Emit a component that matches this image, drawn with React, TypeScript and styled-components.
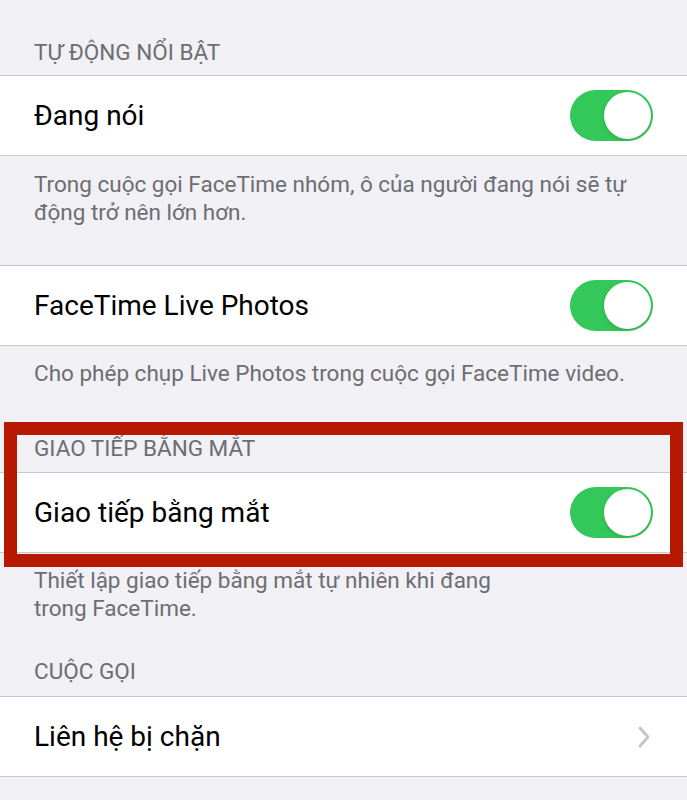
import React from "react";
import styled, { createGlobalStyle } from "styled-components";

const GlobalStyle = createGlobalStyle`
  html, body {
    margin: 0;
    padding: 0;
    background: #f0f0f5;
  }
  body {
    font-family: Roboto, "Liberation Sans", Arial, sans-serif;
    -webkit-font-smoothing: antialiased;
  }
`;

const Page = styled.div`
  position: relative;
  width: 687px;
  height: 800px;
  overflow: hidden;
  background: #f0f0f5;
`;

const Header = styled.div<{ $h: number; $pb?: number }>`
  height: ${(p) => p.$h}px;
  box-sizing: border-box;
  display: flex;
  align-items: flex-end;
  padding: 0 34px ${(p) => p.$pb ?? 10}px;
  font-size: 22.5px;
  line-height: 26px;
  color: #6d6d72;
  text-transform: uppercase;
`;

const Group = styled.div`
  background: #ffffff;
  border-top: 1px solid #c8c7cc;
  border-bottom: 1px solid #c8c7cc;
`;

const Row = styled.div`
  height: 79px;
  display: flex;
  align-items: center;
  justify-content: space-between;
  padding: 0 34px;
`;

const Label = styled.span`
  font-size: 28px;
  color: #000;
`;

const Footer = styled.div<{ $pt: number; $maxW?: number }>`
  padding: ${(p) => p.$pt}px 34px 0;
  font-size: 22.5px;
  line-height: 28px;
  color: #6d6d72;
  ${(p) => (p.$maxW ? `max-width: ${p.$maxW}px;` : "")}
`;

const Track = styled.div<{ $on: boolean }>`
  width: 83px;
  height: 51px;
  border-radius: 26px;
  background: ${(p) => (p.$on ? "#34c759" : "#e9e9eb")};
  position: relative;
  flex-shrink: 0;
`;

const Knob = styled.div<{ $on: boolean }>`
  position: absolute;
  top: 2px;
  ${(p) => (p.$on ? "right: 2px;" : "left: 2px;")}
  width: 47px;
  height: 47px;
  border-radius: 50%;
  background: #fff;
  box-shadow: 0 2px 4px rgba(0, 0, 0, 0.12), 0 0 1px rgba(0, 0, 0, 0.1);
`;

const Highlight = styled.div`
  position: absolute;
  left: 4px;
  top: 422px;
  width: 679px;
  height: 145px;
  box-sizing: border-box;
  border: 13px solid #b51a00;
  pointer-events: none;
`;

const Chevron = () => (
  <svg width="14" height="24" viewBox="0 0 14 24" style={{ marginRight: 2 }}>
    <path
      d="M3 3 L11 12 L3 21"
      fill="none"
      stroke="#c4c4c7"
      strokeWidth="2.8"
      strokeLinecap="round"
      strokeLinejoin="round"
    />
  </svg>
);

const Toggle = ({ on = true }: { on?: boolean }) => (
  <Track $on={on}>
    <Knob $on={on} />
  </Track>
);

export default function App() {
  return (
    <Page>
      <GlobalStyle />
      <Header $h={75}>Tự động nổi bật</Header>
      <Group>
        <Row>
          <Label>Đang nói</Label>
          <Toggle />
        </Row>
      </Group>
      <Footer $pt={14}>
        Trong cuộc gọi FaceTime nhóm, ô của người đang nói sẽ tự động trở nên lớn hơn.
      </Footer>
      <Header $h={39} />
      <Group>
        <Row>
          <Label>FaceTime Live Photos</Label>
          <Toggle />
        </Row>
      </Group>
      <Footer $pt={13}>Cho phép chụp Live Photos trong cuộc gọi FaceTime video.</Footer>
      <Header $h={85} $pb={11}>Giao tiếp bằng mắt</Header>
      <Group>
        <Row>
          <Label>Giao tiếp bằng mắt</Label>
          <Toggle />
        </Row>
      </Group>
      <Footer $pt={13} $maxW={500}>
        Thiết lập giao tiếp bằng mắt tự nhiên khi đang trong FaceTime.
      </Footer>
      <Header $h={74} $pb={12}>Cuộc gọi</Header>
      <Group>
        <Row>
          <Label>Liên hệ bị chặn</Label>
          <Chevron />
        </Row>
      </Group>
      <Highlight />
    </Page>
  );
}
